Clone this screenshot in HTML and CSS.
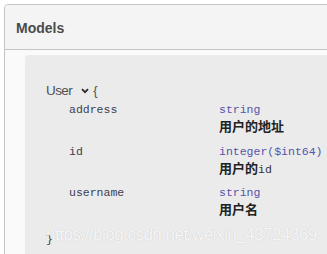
FILE: index.html
```html
<!DOCTYPE html>
<html>
<head>
<meta charset="utf-8">
<link rel="stylesheet" href="styles.css">
</head>
<body>
<section class="models">
  <h4 class="models-title">Models</h4>
  <div class="model-container">
    <div class="model-title">
      <span class="model-name">User</span>
      <svg class="toggle" width="8" height="6" viewBox="0 0 8 6"><path d="M1 1.2 L4 4.2 L7 1.2" fill="none" stroke="#2b2b2b" stroke-width="1.8"/></svg>
      <span class="brace">{</span>
    </div>
    <table class="props">
      <tr>
        <td class="prop-name">address</td>
        <td class="prop-info">
          <div class="prop-type">string</div>
          <div class="prop-desc"><span class="zh">用户的地址</span></div>
        </td>
      </tr>
      <tr>
        <td class="prop-name">id</td>
        <td class="prop-info">
          <div class="prop-type">integer($int64)</div>
          <div class="prop-desc"><span class="zh">用户的</span>id</div>
        </td>
      </tr>
      <tr>
        <td class="prop-name">username</td>
        <td class="prop-info">
          <div class="prop-type">string</div>
          <div class="prop-desc"><span class="zh">用户名</span></div>
        </td>
      </tr>
    </table>
    <div class="brace-close">}</div>
  </div>
</section>
<div class="watermark">https://blog.csdn.net/weixin_43724369</div>
</body>
</html>
```

FILE: styles.css
```css
html, body {
  margin: 0;
  padding: 0;
  background: #ffffff;
  overflow: hidden;
  height: 254px;
}
body {
  padding: 4px 0 0 4px;
  position: relative;
}
.models {
  width: 330px;
  height: 260px;
  border: 1px solid #c4c4c4;
  border-radius: 4px;
  background: #fafafa;
  box-sizing: border-box;
}
.models-title {
  margin: 0 0 5px 0;
  padding: 13px 0 11px 11px;
  font-family: "Liberation Sans", Arial, sans-serif;
  font-weight: 700;
  font-size: 14px;
  line-height: 20px;
  color: #4b4b4b;
  background: #f4f4f4;
  border-bottom: 1px solid #c4c4c4;
  border-radius: 4px 4px 0 0;
}
.model-container {
  margin-left: 20px;
  background: #ebebeb;
  border-radius: 4px 0 0 0;
  height: 210px;
  padding: 28px 0 0 21px;
  box-sizing: border-box;
}
.model-title {
  height: 16px;
  line-height: 16px;
  font-family: "Liberation Sans", Arial, sans-serif;
  font-size: 13px;
  color: #505050;
  white-space: nowrap;
}
.model-name {
  font-size: 13.5px;
  letter-spacing: -0.6px;
}
.toggle {
  margin-left: 5px;
  margin-right: 1px;
  vertical-align: 1px;
}
.brace {
  color: #505050;
}
.props {
  border-collapse: collapse;
  margin: 3px 0 0 23px;
  font-family: "Liberation Mono", "DejaVu Sans Mono", monospace;
  font-size: 11.5px;
  line-height: 16px;
}
.props td {
  padding: 0 0 9.5px 0;
  vertical-align: top;
}
.prop-name {
  width: 150px;
  color: #3b4151;
}
.prop-type {
  height: 16px;
  color: #55a;
  white-space: nowrap;
}
.prop-desc {
  height: 16px;
  color: #333333;
  white-space: nowrap;
}
.zh {
  font-family: "Noto Sans CJK SC", sans-serif;
  font-weight: 700;
  font-size: 13px;
  line-height: 16px;
  color: #222222;
}
.brace-close {
  margin-top: 5.5px;
  font-family: "Liberation Mono", "DejaVu Sans Mono", monospace;
  font-size: 11.5px;
  line-height: 16px;
  color: #3b4151;
}
.watermark {
  position: absolute;
  left: 46px;
  top: 225px;
  font-family: "Liberation Sans", Arial, sans-serif;
  font-size: 17px;
  letter-spacing: -0.5px;
  line-height: 20px;
  color: rgba(255, 255, 255, 0.85);
  text-shadow: 0 0 1px rgba(0, 0, 0, 0.18);
  white-space: nowrap;
}
```
